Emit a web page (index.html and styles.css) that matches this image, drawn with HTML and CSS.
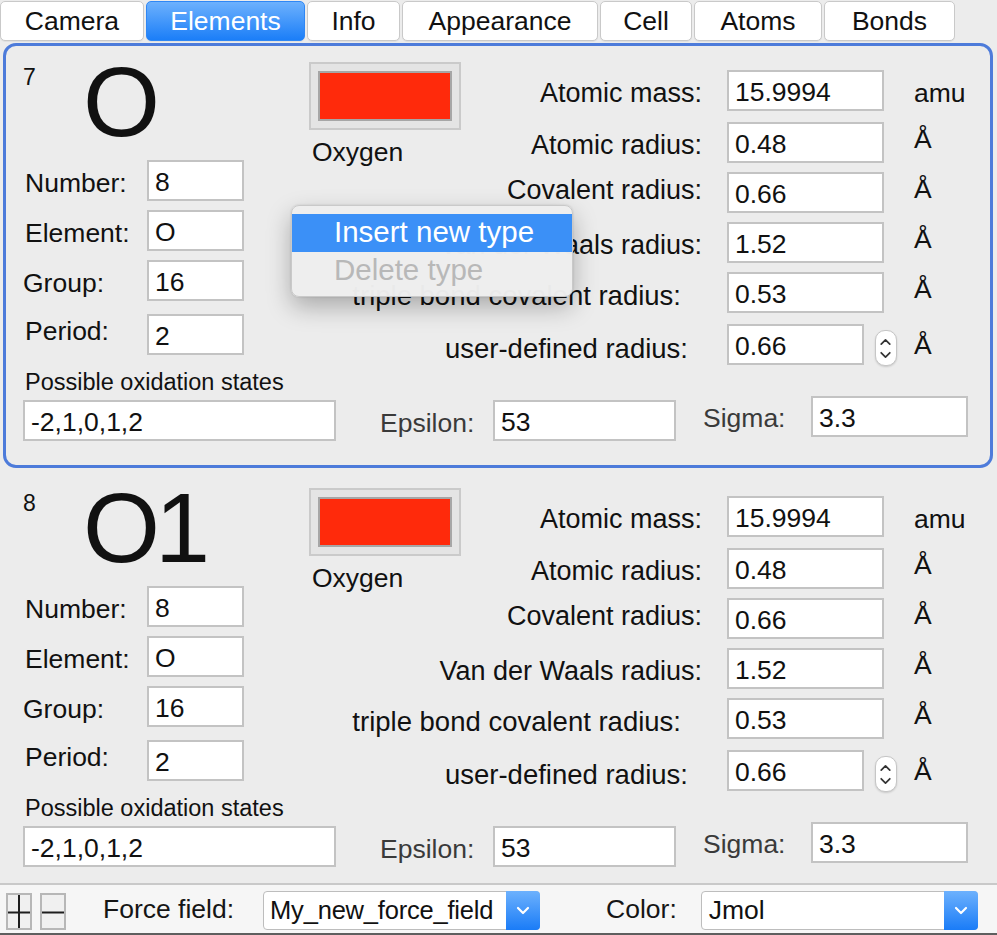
FILE: index.html
```html
<!DOCTYPE html>
<html>
<head>
<meta charset="utf-8">
<link rel="stylesheet" href="styles.css">
</head>
<body>
<div class="app">
  <div class="tabbar">
    <div class="tab t-camera">Camera</div>
    <div class="tab t-elements active">Elements</div>
    <div class="tab t-info">Info</div>
    <div class="tab t-appearance">Appearance</div>
    <div class="tab t-cell">Cell</div>
    <div class="tab t-atoms">Atoms</div>
    <div class="tab t-bonds">Bonds</div>
  </div>

  <div class="scroll">
    <div class="card selected">
      <div class="main">
        <div class="lcol">
          <div class="head">
            <div class="idx">7</div>
            <div class="sym">O</div>
            <div class="swatch-wrap">
              <div class="swatch"><div class="swatch-in"></div></div>
              <div class="ename">Oxygen</div>
            </div>
          </div>
          <div class="lfields">
            <div class="lrow"><span class="lbl">Number:</span><input class="field w97" value="8" readonly></div>
            <div class="lrow"><span class="lbl">Element:</span><input class="field w97" value="O" readonly></div>
            <div class="lrow"><span class="lbl group">Group:</span><input class="field w97" value="16" readonly></div>
            <div class="lrow period"><span class="lbl up">Period:</span><input class="field w97" value="2" readonly></div>
          </div>
        </div>
        <div class="rcol">
          <div class="rrow"><span class="rlbl">Atomic mass:</span><input class="field w157" value="15.9994" readonly><span class="unit">amu</span></div>
          <div class="rrow big"><span class="rlbl">Atomic radius:</span><input class="field w157" value="0.48" readonly><span class="unit ang">Å</span></div>
          <div class="rrow"><span class="rlbl up">Covalent radius:</span><input class="field w157" value="0.66" readonly><span class="unit ang">Å</span></div>
          <div class="rrow"><span class="rlbl">Van der Waals radius:</span><input class="field w157" value="1.52" readonly><span class="unit ang">Å</span></div>
          <div class="rrow"><span class="rlbl triple">triple bond covalent radius:</span><input class="field w157" value="0.53" readonly><span class="unit ang">Å</span></div>
          <div class="rrow big"><span class="rlbl down">user-defined radius:</span><input class="field w137" value="0.66" readonly><span class="spin"><svg width="22" height="36" viewBox="0 0 22 36"><path d="M6.5 14 L11 9.5 L15.5 14" fill="none" stroke="#333" stroke-width="1.8" stroke-linecap="round" stroke-linejoin="round"/><path d="M6.5 23 L11 27.5 L15.5 23" fill="none" stroke="#333" stroke-width="1.8" stroke-linecap="round" stroke-linejoin="round"/></svg></span><span class="unit ang near">Å</span></div>
        </div>
      </div>
      <div class="bottom">
        <div class="ox">
          <div class="oxlbl">Possible oxidation states</div>
          <input class="field w313" value="-2,1,0,1,2" readonly>
        </div>
        <span class="eps">Epsilon:</span>
        <input class="field w183" value="53" readonly>
        <span class="sig">Sigma:</span>
        <input class="field w157 raised" value="3.3" readonly>
      </div>
    </div>

    <div class="card">
      <div class="main">
        <div class="lcol">
          <div class="head">
            <div class="idx">8</div>
            <div class="sym">O1</div>
            <div class="swatch-wrap">
              <div class="swatch"><div class="swatch-in"></div></div>
              <div class="ename">Oxygen</div>
            </div>
          </div>
          <div class="lfields">
            <div class="lrow"><span class="lbl">Number:</span><input class="field w97" value="8" readonly></div>
            <div class="lrow"><span class="lbl">Element:</span><input class="field w97" value="O" readonly></div>
            <div class="lrow"><span class="lbl group">Group:</span><input class="field w97" value="16" readonly></div>
            <div class="lrow period"><span class="lbl up">Period:</span><input class="field w97" value="2" readonly></div>
          </div>
        </div>
        <div class="rcol">
          <div class="rrow"><span class="rlbl">Atomic mass:</span><input class="field w157" value="15.9994" readonly><span class="unit">amu</span></div>
          <div class="rrow big"><span class="rlbl">Atomic radius:</span><input class="field w157" value="0.48" readonly><span class="unit ang">Å</span></div>
          <div class="rrow"><span class="rlbl up">Covalent radius:</span><input class="field w157" value="0.66" readonly><span class="unit ang">Å</span></div>
          <div class="rrow"><span class="rlbl">Van der Waals radius:</span><input class="field w157" value="1.52" readonly><span class="unit ang">Å</span></div>
          <div class="rrow"><span class="rlbl triple">triple bond covalent radius:</span><input class="field w157" value="0.53" readonly><span class="unit ang">Å</span></div>
          <div class="rrow big"><span class="rlbl down">user-defined radius:</span><input class="field w137" value="0.66" readonly><span class="spin"><svg width="22" height="36" viewBox="0 0 22 36"><path d="M6.5 14 L11 9.5 L15.5 14" fill="none" stroke="#333" stroke-width="1.8" stroke-linecap="round" stroke-linejoin="round"/><path d="M6.5 23 L11 27.5 L15.5 23" fill="none" stroke="#333" stroke-width="1.8" stroke-linecap="round" stroke-linejoin="round"/></svg></span><span class="unit ang near">Å</span></div>
        </div>
      </div>
      <div class="bottom">
        <div class="ox">
          <div class="oxlbl">Possible oxidation states</div>
          <input class="field w313" value="-2,1,0,1,2" readonly>
        </div>
        <span class="eps">Epsilon:</span>
        <input class="field w183" value="53" readonly>
        <span class="sig">Sigma:</span>
        <input class="field w157 raised" value="3.3" readonly>
      </div>
    </div>
  </div>

  <div class="bottombar">
    <span class="pm"><svg width="22" height="33" viewBox="0 0 22 33"><path d="M0 17.5 H22 M11 0 V33" stroke="#1e1e1e" stroke-width="2"/></svg></span>
    <span class="pm minus"><svg width="22" height="33" viewBox="0 0 22 33"><path d="M0 17.5 H22" stroke="#1e1e1e" stroke-width="2"/></svg></span>
    <span class="blbl ff">Force field:</span>
    <div class="combo c1"><span class="ctext tight">My_new_force_field</span><span class="carrow"><svg width="14" height="9" viewBox="0 0 14 9"><path d="M2 2 L7 7 L12 2" fill="none" stroke="#fff" stroke-width="2.2" stroke-linecap="round" stroke-linejoin="round"/></svg></span></div>
    <span class="blbl col">Color:</span>
    <div class="combo c2"><span class="ctext">Jmol</span><span class="carrow"><svg width="14" height="9" viewBox="0 0 14 9"><path d="M2 2 L7 7 L12 2" fill="none" stroke="#fff" stroke-width="2.2" stroke-linecap="round" stroke-linejoin="round"/></svg></span></div>
  </div>

  <div class="menu">
    <div class="mitem hl">Insert new type</div>
    <div class="mitem dis">Delete type</div>
  </div>
</div>
</body>
</html>
```

FILE: styles.css
```css
* { box-sizing: border-box; }
html, body { margin: 0; padding: 0; }
body {
  background: #ececec;
  font-family: "Liberation Sans", Arial, sans-serif;
  color: #111;
}
.app {
  width: 997px;
  height: 935px;
  position: relative;
  overflow: hidden;
  display: flex;
  flex-direction: column;
}
.tabbar {
  height: 43px;
  padding-top: 1px;
  display: flex;
  gap: 2px;
  flex: none;
}
.tab {
  height: 40px;
  border: 1px solid #c9c9c9;
  border-radius: 5px;
  background: #fff;
  font-size: 26.5px;
  line-height: 38px;
  text-align: center;
  color: #111;
  box-shadow: 0 1px 0 rgba(0,0,0,0.05);
}
.t-camera { width: 144px; }
.t-elements { width: 159px; }
.t-info { width: 93px; }
.t-appearance { width: 196px; }
.t-cell { width: 92px; }
.t-atoms { width: 128px; }
.t-bonds { width: 131px; }
.tab.active {
  background: linear-gradient(#6db1fd, #1b7ef8);
  border-color: #2f87f5;
  color: #fff;
}
.scroll {
  height: 840px;
  overflow: hidden;
  flex: none;
}
.card {
  margin-left: 3px;
  width: 990px;
  border: 3px solid transparent;
  border-radius: 13px;
  margin-bottom: 1px;
}
.card.selected { border-color: #4d7bda; }
.main { display: flex; height: 319px; }
.lcol { width: 464px; flex: none; }
.head { height: 114px; display: flex; align-items: flex-start; }
.idx {
  margin-left: 17px;
  width: 58px;
  font-size: 23px;
  line-height: 1;
  margin-top: 20px;
}
.sym {
  width: 228px;
  font-size: 99px;
  line-height: 1;
  margin-top: 6px;
  margin-left: 2px;
  margin-right: -2px;
  letter-spacing: -5px;
  color: #111;
}
.swatch-wrap { margin-top: 16px; }
.swatch {
  width: 152px;
  height: 68px;
  border: 2px solid #cacaca;
  background: #e4e4e4;
  padding: 7px;
}
.swatch-in {
  width: 100%;
  height: 100%;
  background: #ff2a0b;
  border: 2px solid #a6a6a6;
}
.ename {
  font-size: 26.5px;
  line-height: 30px;
  margin-top: 7px;
  margin-left: 3px;
}
.lfields { display: flex; flex-direction: column; gap: 9px; }
.lrow { display: flex; align-items: center; height: 41px; }
.lrow.period { margin-top: 4px; }
.lbl {
  width: 141px;
  padding-left: 19px;
  font-size: 26.5px;
  padding-top: 6px;
}
.lbl.group { padding-left: 17px; }
.lbl.up { padding-top: 0; padding-bottom: 6px; }
.field {
  height: 41px;
  border: 2px solid #c3c3c3;
  background: #fff;
  font-family: "Liberation Sans", Arial, sans-serif;
  font-size: 26.5px;
  color: #111;
  padding: 4px 0 0 6px;
  margin: 0;
  outline: none;
  border-radius: 0;
}
.w97 { width: 97px; }
.w157 { width: 157px; }
.w137 { width: 137px; }
.w183 { width: 183px; }
.w313 { width: 313px; }
.rcol { width: 520px; flex: none; padding-top: 24px; display: flex; flex-direction: column; gap: 9px; }
.rrow { display: flex; align-items: center; height: 41px; }
.rrow.big { margin-top: 2px; }
.rlbl {
  width: 232px;
  flex: none;
  display: flex;
  justify-content: flex-end;
  font-size: 27px;
  margin-right: 25px;
  padding-top: 6px;
  white-space: nowrap;
}
.rlbl.up { padding-top: 0; padding-bottom: 4px; }
.rlbl.triple { font-size: 27.5px; width: 211px; margin-right: 46px; }
.rlbl.down { padding-top: 8px; margin-right: 39px; width: 218px; font-size: 27.5px; }
.unit { margin-left: 30px; font-size: 26.5px; padding-top: 6px; }
.unit.ang { padding-top: 0; padding-bottom: 6px; }
.unit.near { margin-left: 17px; padding-bottom: 0; padding-top: 2px; }
.spin {
  margin-left: 11px;
  width: 22px;
  height: 36px;
  border: 1px solid #c6c6c6;
  border-radius: 10px;
  background: #fff;
  box-shadow: 0 1px 2px rgba(0,0,0,0.15);
  display: flex;
  align-items: center;
  justify-content: center;
  margin-top: 6px;
}
.spin svg { display: block; margin-left: -1px; }
.bottom { display: flex; align-items: flex-end; margin-top: 3px; padding-bottom: 24px; }
.ox { margin-left: 17px; width: 313px; }
.oxlbl { font-size: 23.5px; line-height: 28px; margin-bottom: 4px; padding-left: 2px; }
.eps {
  margin-left: 44px;
  width: 113px;
  font-size: 26.5px;
  color: #3a3a3a;
  line-height: 41px;
  margin-bottom: -3px;
}
.sig {
  margin-left: 27px;
  width: 108px;
  font-size: 26.5px;
  color: #3a3a3a;
  line-height: 41px;
  margin-bottom: 2px;
}
.raised { margin-bottom: 4px; }
.bottombar {
  flex: 1;
  border-top: 2px solid #c9c9c9;
  border-bottom: 2px solid #5e5e5e;
  background: #f6f6f6;
  display: flex;
  align-items: center;
  padding-left: 6px;
}
.pm {
  width: 26px;
  height: 37px;
  border: 2px solid #b7b7b7;
  background: #f0f0f0;
  display: flex;
  align-items: center;
  justify-content: center;
  margin-top: 4px;
}
.pm svg { display: block; }
.pm.minus { margin-left: 8px; }
.blbl { font-size: 26.5px; color: #151515; }
.ff { margin-left: 37px; }
.col { margin-left: 66px; }
.combo {
  height: 39px;
  border: 1px solid #bdbdbd;
  border-radius: 4px;
  background: #fff;
  display: flex;
  align-items: stretch;
  margin-top: 2px;
}
.c1 { margin-left: 29px; width: 277px; }
.c2 { margin-left: 24px; width: 277px; }
.ctext {
  flex: 1;
  font-size: 26.5px;
  line-height: 37px;
  padding-left: 7px;
  white-space: nowrap;
  overflow: hidden;
  color: #111;
}
.ctext.tight { font-size: 25.5px; padding-left: 6px; letter-spacing: -0.2px; }
.carrow {
  width: 34px;
  flex: none;
  margin: -1px -1px -1px 0;
  border-radius: 0 4px 4px 0;
  background: linear-gradient(#6db1fd, #1a7cf7);
  display: flex;
  align-items: center;
  justify-content: center;
}
.carrow svg { display: block; }
.menu {
  position: absolute;
  left: 291px;
  top: 205px;
  width: 282px;
  height: 92px;
  background: rgba(238,238,238,0.98);
  border: 1px solid #c9c9c9;
  border-radius: 8px;
  box-shadow: 0 10px 24px rgba(0,0,0,0.28), 0 0 2px rgba(0,0,0,0.15);
  padding-top: 8px;
}
.mitem {
  height: 38px;
  font-size: 29.5px;
  line-height: 36px;
  padding-left: 42px;
  white-space: nowrap;
}
.mitem.hl { background: #3b90f7; color: #fff; }
.mitem.dis { color: #b8b8b8; height: 37px; }
```
